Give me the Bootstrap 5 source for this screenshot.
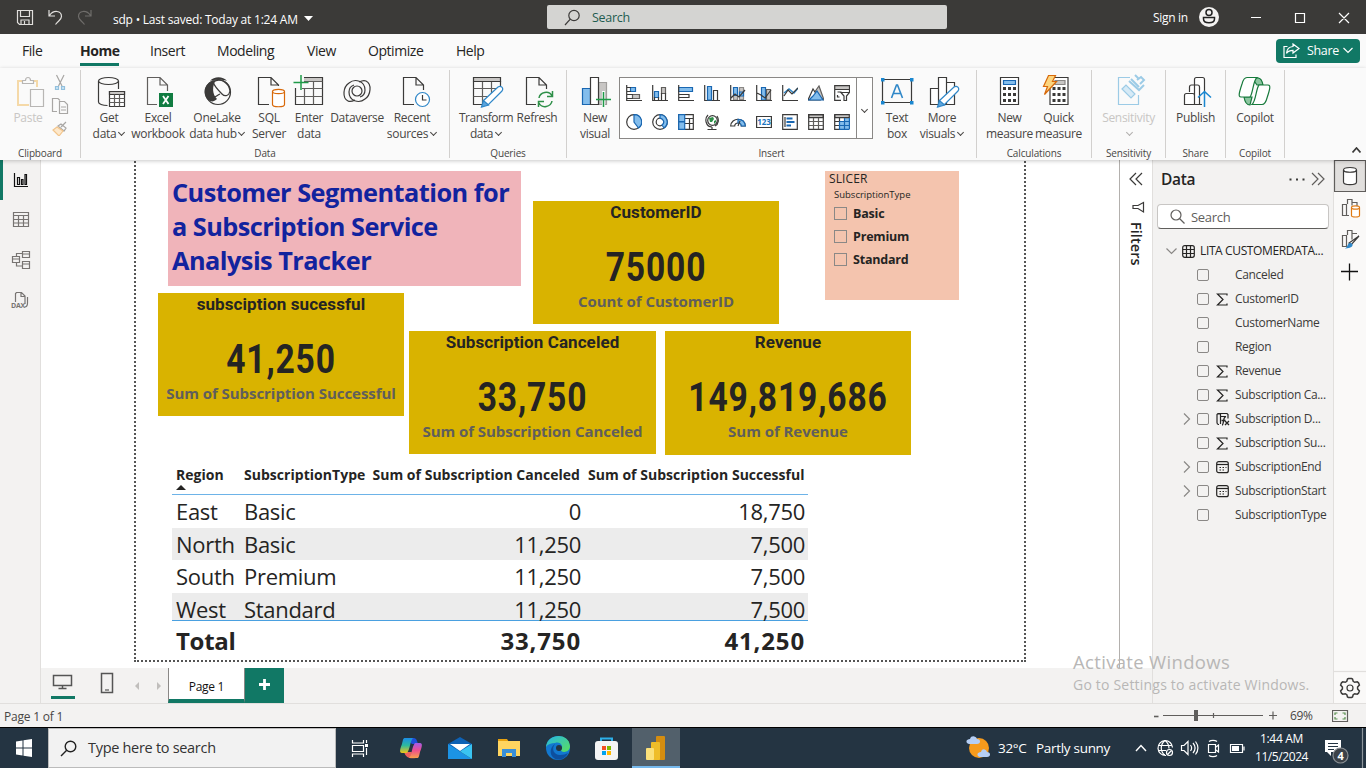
<!DOCTYPE html>
<html lang="en">
<head>
<meta charset="utf-8">
<title>sdp - Power BI Desktop</title>
<link href="https://cdn.jsdelivr.net/npm/bootstrap@5.3.0/dist/css/bootstrap.min.css" rel="stylesheet">
<style>
body{width:1366px;height:768px;overflow:hidden;font-family:"Open Sans","Noto Sans",sans-serif;font-size:12px;letter-spacing:-.3px;color:#252423;line-height:16px;background:#f3f2f1}
svg{display:block;fill:none;stroke:#3b3a39;stroke-width:1.2;flex:none}
.titlebar{height:34px;background:#3b3a38;color:#fff}
.tb-icons{width:113px;padding-left:16px}
.tb-name{width:434px;padding-top:6px;letter-spacing:-.22px}
.tb-search{width:400px;height:24px;background:#d4d4d2;border-radius:2px;color:#1e5c50;padding-left:17px;font-size:12.5px}
.tabs{height:34px;background:#fafafa;font-size:14px;letter-spacing:-.45px;padding-bottom:1px}
.tabs .tab{position:relative;white-space:nowrap}
.tabs .on{font-weight:700}
.tabs .on::after{content:"";position:absolute;left:0;right:0;bottom:-7px;height:3px;background:#117865}
.share{width:84px;height:24px;background:#117865;border-radius:4px;color:#fff;font-size:12.5px;letter-spacing:-.3px;margin-right:6px}
.ribbon{height:92px;background:#fafafa;color:#484644;position:relative;z-index:2;box-shadow:0 1px 4px rgba(0,0,0,.22)}
.grp{position:relative;height:88px;margin-top:2px;border-right:1px solid #d2d0ce;text-align:center}
.grp .glabel{position:absolute;left:0;right:0;bottom:-2px;font-size:10px;line-height:14px;letter-spacing:-.15px}
.rb{padding-top:4px;white-space:nowrap}
.rb svg{margin:0 auto 2px}
.rb.off{color:#c8c6c4}
.w36{width:36px}.w40{width:40px}.w44{width:44px}.w48{width:48px}.w49{width:49px}.w54{width:54px}.w56{width:56px}.w64{width:64px}
.g1{width:81px}.g2{width:369px;padding-left:6px}.g3{width:117px;padding-left:9px}.g4{width:410px;padding-left:10px}.g5{width:115px;padding-left:8px}.g6{width:74px}.g7{width:60px}.g8{width:59px}
.g3 .w54{letter-spacing:-.5px}
.clip{margin-left:-5px}
.chev{display:inline-block;width:5px;height:5px;border:solid #484644;border-width:0 1.4px 1.4px 0;transform:rotate(45deg);margin:0 1px 3px 3px}
.off .chev{border-color:#b0aeac}
.gallery{width:254px;height:62px;border:1px solid #8a8886;background:#fff;margin:7px 6px 0}
.gal-grid{display:grid;grid-template-columns:repeat(9,26px);grid-template-rows:28px 28px;row-gap:1px;padding:1px 0 0 1px;width:237px;border-right:1px solid #8a8886;place-items:center;align-content:start}
.gal-more{width:15px}
.gal-more .chev{margin:3px 0 0 0}
.main{height:543px}
.lrail{width:41px;border-right:1px solid #e1dfdd;background:#f3f2f1}
.lrail .it{height:40px;border-left:3px solid transparent}
.lrail .it.on{border-color:#117865}
.stage{width:1078px;height:508px;background:#fff;position:relative;overflow:hidden}
.page-frame{position:absolute;left:93px;top:-10px;width:892px;height:512px;border:2px dotted #555}
.visual{position:absolute}
.title-box{left:127px;top:11px;width:353px;height:115px;background:#f0b4ba;color:#12239e;font-weight:700;font-size:25.3px;line-height:34px;padding:4px 4px;white-space:nowrap;letter-spacing:-.52px}
.kpi{width:246px;height:123px;background:#d9b300;text-align:center;font-weight:700;white-space:nowrap;color:#252423}
.kpi .k-title{font-family:Roboto,sans-serif;font-size:17px;line-height:22px;letter-spacing:.08px}
.kpi .k-val{font-family:Roboto,sans-serif;font-size:40px;line-height:44px;margin-top:23px;letter-spacing:1px;transform:scaleX(.84)}
.kpi .k-cap{font-size:15px;line-height:20px;margin-top:1px;color:#605e5c;letter-spacing:-.05px}
.slicer{left:784px;top:11px;width:134px;height:129px;background:#f4c4ae}
.chk{width:13px;height:13px;border:1px solid #8a8886}
.grid-vis{left:131px;top:300px;width:636px;font-size:22px;letter-spacing:-.3px}
.grid-vis .r{display:grid;grid-template-columns:68px 128px 216px 224px;height:32.7px;line-height:32px;white-space:nowrap}
.grid-vis .r>div{padding:0 4px}
.grid-vis .r>div:nth-child(n+3){text-align:right;padding-right:3px}
.grid-vis .hd{height:35px;border-bottom:1px solid #6db3e8;font-size:14px;font-weight:700;line-height:30px;letter-spacing:.03px}
.grid-vis .r.hd>div:nth-child(n+3){padding-right:4px}
.grid-vis .alt{background:#ececec}
.grid-vis .last{height:28px;border-bottom:1px solid #4aa0e0}
.grid-vis .tot{font-weight:700;font-size:24px;line-height:40px}
.grid-vis .tot>div:nth-child(n+3){letter-spacing:.85px}
.pagebar{height:35px;background:#f3f2f1}
.ptab{width:77px;height:35px;background:#fff;border-left:1px solid #8a8886;border-right:1px solid #8a8886;border-bottom:4px solid #117865;line-height:37px;color:#111}
.filters{width:33px;background:#fff;border-left:1px solid #b3b0ad;height:508px}
.vtext{writing-mode:vertical-rl;font-weight:600;font-size:14.5px;line-height:18px;letter-spacing:.05px;margin:2px 0 0 -1px}
.dpane{width:181px;border-left:1px solid #e1dfdd;background:#f3f2f1}
.dsearch{height:25px;width:172px;background:#fff;border:1px solid #c8c6c4;border-bottom-color:#605e5c;border-radius:4px;font-size:13px;color:#605e5c}
.fr{height:24px;padding-left:29px;color:#3b3a39;white-space:nowrap;letter-spacing:-.33px}
.fr .cb{width:12px;height:12px;border:1px solid #8a8886;border-radius:2px;margin-left:5px}
.fr .nm{margin-left:5px}
.rrail{width:33px;border-left:1px solid #e1dfdd;background:#faf9f8}
.statusbar{height:24px;border-top:1px solid #e1dfdd;background:#f3f2f1;color:#484644}
.taskbar{height:41px;background:#243442;border-top:1px solid #000;color:#fff}
.wsearch{width:288px;height:40px;background:#f2f2f2;border:1px solid #bbb;color:#333;font-size:14.5px;letter-spacing:-.3px}
.tk.on{width:48px;height:40px;background:#52606b;border-bottom:2px solid #76b9ed}
.watermark{position:absolute;left:1073px;top:651px;color:#b8b7b6;z-index:5;white-space:nowrap;letter-spacing:.2px}
.watermark .l1{font-size:18.5px;line-height:22px;letter-spacing:.33px}
.watermark .l2{font-size:14px;line-height:22px;margin-top:1px}
</style>
</head>
<body class="position-relative">

<div class="titlebar d-flex align-items-center">
  <div class="tb-icons">
    <svg width="80" height="20" viewBox="16 7 80 20" style="stroke:#e1dfdd"><path d="M17.500 10.500h15v14h-13l-2-2zM20.500 10.500v6h9v-6M21 24.500v-4.500h8v4.500M24.500 21v3"/><path d="M49 10v6h6M49.500 15.500c4-6 12-5 12 1 0 3-3 4-6 8"/><path stroke="#6f6d6b" d="M91 10v6h-6M90.500 15.500c-4-6-12-5-12 1 0 3 3 4 6 8"/></svg>
  </div>
  <div class="tb-name d-flex align-items-center"><span>sdp • Last saved: Today at 1:24 AM</span>
    <svg class="mb-1" width="9" height="5" viewBox="0 0 9 5" style="margin-left:6px"><path fill="#fff" stroke="none" d="M0 0h9L4.500 5z"/></svg></div>
  <div class="tb-search d-flex align-items-center">
    <svg width="17" height="17" viewBox="0 0 17 17"><circle cx="10" cy="6.500" r="5.200"/><path d="M6.300 10.200 1 16"/></svg>
    <span style="margin:1px 0 0 11px">Search</span></div>
  <span style="margin:2px 0 0 206px">Sign in</span>
  <svg width="168" height="24" viewBox="1198 5 168 24" class="ms-auto" style="stroke:#fff"><circle cx="1209" cy="17" r="10" fill="#f3f2f1" stroke="none"/><g stroke="#222" stroke-width="1.500"><circle cx="1209" cy="12.500" r="3"/><path d="M1203.500 17.500h11v1.500c0 5-11 5-11 0z"/></g><path d="M1251 17.500h10M1295.500 13.500h9v9h-9zM1339 13l10 10M1349 13l-10 10"/></svg>
</div>

<div class="tabs d-flex align-items-center">
  <span class="tab" style="margin-left:22px;width:58px">File</span><span class="tab on" style="width:39px">Home</span><span class="tab" style="margin-left:31px;width:67px">Insert</span><span class="tab" style="width:90px">Modeling</span><span class="tab" style="width:61px">View</span><span class="tab" style="width:88px">Optimize</span><span class="tab">Help</span>
  <div class="share ms-auto d-flex align-items-center justify-content-center">
    <svg width="17" height="15" viewBox="0 0 17 15" style="stroke:#fff"><path d="M4.500 3.500H1v11h12v-3"/><path d="M10 1l6 4.500-6 4.500V7.300c-3 0-5 .7-6.500 3 .3-4 2.700-6.500 6.500-6.800z"/></svg>
    <span style="margin:0 4px 0 7px">Share</span>
    <svg width="10" height="7" viewBox="0 0 10 7" style="stroke:#fff"><path d="M.5 1 5 5.500 9.500 1"/></svg>
  </div>
</div>

<div class="ribbon d-flex">
  <div class="grp g1 d-flex">
    <div class="rb off w56"><svg width="36" height="34" viewBox="10 74 36 34"><path stroke="#f5d9a8" stroke-width="2" d="M22 81h-4v24h11M33 81h4v6"/><path stroke="#b8b6b4" d="M22.500 83.500v-3h3c0-4 5-4 5 0h3v3z"/><path fill="#fafafa" stroke="#b8b6b4" d="M30.500 89.500h13v17h-13z"/></svg>Paste</div>
    <svg class="clip" width="20" height="66" viewBox="51 70 20 66" style="stroke:#a8a6a4"><path d="M56.500 75 62 86M64 75l-5.500 11"/><g stroke="#92c0dd" fill="#c9e3f4"><path d="M55.500 86.500h3v3h-3zM61.500 86.500h3v3h-3z"/></g><path d="M57 111.500h-4.500v-13H58l2 2"/><path d="M59.500 101.500h5l3 3v9h-8zM61 107h5M61 110h5"/><path d="m66 122-5 5M58 126l6 5 2-3-5-4z"/><path stroke="#f2c58c" fill="#fde8cb" d="m57 127-4 3 6 6 4-5z"/></svg>
    <div class="glabel">Clipboard</div>
  </div>
  <div class="grp g2 d-flex">
    <div class="rb w44"><svg width="36" height="34" viewBox="91 74 36 34"><ellipse cx="108.500" cy="81" rx="10" ry="3.500"/><path d="M98.500 81v21c0 2 4 3.500 9 3.500M118.500 81v8"/><path fill="#fff" d="M109.500 91.500h15v15h-15z"/><path fill="#c8c6c4" d="M109.500 91.500h15v3h-15z"/><path stroke="#605e5c" d="M114.500 94.500v12M119.500 94.500v12M109.500 98.500h15M109.500 102.500h15"/></svg>Get<br>data<i class="chev"></i></div>
    <div class="rb w54"><svg width="36" height="34" viewBox="140 74 36 34"><path stroke="#605e5c" d="M157 104.500h-9.500v-27H160l7.500 7.500v6M160 77.500V85h7.500"/><path fill="#107c41" stroke="none" d="M159 93h14v14h-14z"/><path stroke="#fff" stroke-width="1.800" d="m163 96 5.500 8M168.500 96l-5.500 8"/></svg>Excel<br>workbook</div>
    <div class="rb w64"><svg width="36" height="34" viewBox="199 74 36 34"><path fill="#3b3a39" stroke="none" d="M216 80c-4 6-4 14 1 19-3 3-6 3-9 1-7-8-3-18 8-20zM210 81c4-5 13-5 17 0-5-2-12-2-17 0z"/><circle cx="218" cy="92" r="12.500"/><path d="M213 82c8-5 16 1 17 9-1 5-5 6-8 3-4-4-8-9-9-12zM209 99c5 0 7-3 11-5"/></svg>OneLake<br>data hub<i class="chev" style="margin-left:2px"></i></div>
    <div class="rb w40"><svg width="36" height="34" viewBox="251 74 36 34"><path d="M269 104.500h-10.500v-27H271l7.500 7.500v1M271 77.500V85h7.500"/><g stroke="#d8690a" fill="#fff"><path d="M272.500 91.500v13c0 3 12 3 12 0v-13"/><ellipse cx="278.500" cy="91.500" rx="6" ry="2.200"/></g></svg>SQL<br>Server</div>
    <div class="rb w40"><svg width="36" height="34" viewBox="291 74 36 34"><path fill="#c8c6c4" stroke="none" d="M304 77h19v4h-19z"/><path d="M304 77.500h18.500v27h-27V88"/><path stroke="#605e5c" d="M295.500 96.500h27M302 88.500h20.500M304.500 88v16.500M313.500 81v23.500M304 81.500h18.500"/><path stroke="#1f9a48" stroke-width="1.500" d="M301 75v15M293.500 82.500h15"/></svg>Enter<br>data</div>
    <div class="rb w56"><svg width="36" height="34" viewBox="339 74 36 34"><circle cx="357" cy="91" r="5"/><path d="M366 81c6 3 5 14-1 18-6 5-16 2-16-7 0-4 2-6 5-7M348 101c-6-3-5-14 1-18 6-5 16-2 16 7 0 4-2 6-5 7M366 81c-2-1-5 0-7 1M348 101c2 1 5 0 7-1"/></svg>Dataverse</div>
    <div class="rb w54"><svg width="36" height="34" viewBox="394 74 36 34" style="position:relative;left:1px"><path d="M413 104.500h-10.500v-27H415l7.500 7.500v5M415 77.500V85h7.500"/><circle cx="421.500" cy="99.500" r="7" fill="#fff" stroke="#2f87c8"/><path d="M421.500 95v5h4"/></svg>Recent<br>sources<i class="chev"></i></div>
    <div class="glabel">Data</div>
  </div>
  <div class="grp g3 d-flex">
    <div class="rb w54"><svg width="36" height="34" viewBox="468 74 36 34"><path fill="#c8c6c4" d="M473.500 77.500h27v4h-27z"/><path d="M482 104.500h-8.500v-23M500.500 81v5"/><path stroke="#605e5c" d="M473.500 88.500h25M473.500 96.500h18M482.500 82v22M491.500 82v11"/><path fill="#fff" stroke="#2f87c8" d="m483 101 15-14c3-2 6 1 4 4l-14 14z"/><path fill="#5ea5dc" stroke="#2f87c8" d="m481.500 107 2-6.500 5 4.500z"/></svg>Transform<br>data<i class="chev"></i></div>
    <div class="rb w48"><svg width="36" height="34" viewBox="519 74 36 34"><path d="M536 104.500h-9.500v-27H539l7.500 7.500v4M539 77.500V85h7.500"/><path stroke="#2e8f48" stroke-width="1.500" d="M539 98c1-6 10-8 13-2M552.500 91v5.500H547M552 101c-1 6-10 8-13 2M538.500 107v-5.500h5.500"/></svg>Refresh</div>
    <div class="glabel">Queries</div>
  </div>
  <div class="grp g4 d-flex">
    <div class="rb w36"><svg width="36" height="34" viewBox="577 74 36 34"><path fill="#83bdec" stroke="#1967b2" d="M582.500 88.500h8v16h-8z"/><path fill="#c8c6c4" stroke="#a19f9d" d="M598.500 82.500h8v22h-8z"/><path fill="#fff" d="M590.500 77.500h8v27h-8z"/><path stroke="#fafafa" stroke-width="3" d="M603.500 91v15"/><path stroke="#1f9a48" stroke-width="1.500" d="M603.500 92v15M596 99.500h15"/></svg>New<br>visual</div>
    <div class="gallery d-flex">
      <div class="gal-grid">
        <svg width="16" height="16" viewBox="0 0 16 16"><path fill="#83bdec" stroke="#1967b2" d="M4.500 2.500h5v4h-5z"/><path fill="#c8c6c4" stroke="#605e5c" d="M6.500 9.500h7v4h-7z"/><path d="M.7 0v15.500H16M1 2.500h4M1 6.500h4M1 9.500h6M1 13.500h6"/></svg>
        <svg width="16" height="16" viewBox="0 0 16 16"><path fill="#83bdec" stroke="#1967b2" d="M2.500 6.500h4v6h-4z"/><path fill="#c8c6c4" stroke="#605e5c" d="M9.500 2.500h4v6h-4z"/><path d="M.7 0v15.500H16M2.500 12v3M6.500 12v3M9.500 8v7M13.500 8v7"/></svg>
        <svg width="16" height="16" viewBox="0 0 16 16"><path fill="#83bdec" stroke="#1967b2" d="M.5 2.500h14v4H.5z"/><path d="M.7 0v15.500H16M1 9.500h10v3H1"/></svg>
        <svg width="16" height="16" viewBox="0 0 16 16"><path d="M.7 0v15.500H16M9.500 15V5.500h4V15"/><path fill="#83bdec" stroke="#1967b2" d="M3.500 1.500h4v13.500h-4z"/></svg>
        <svg width="16" height="16" viewBox="0 0 16 16"><path fill="#c8c6c4" stroke="#8a8886" d="M9.500 2.500h4v12h-4zM3.500 10h4v5h-4z"/><path fill="#83bdec" stroke="#1967b2" d="M3.500 2.500h4v8h-4zM9.500 7h4v4h-4z"/><path d="M.7 0v15.500H16M1 13l4-4 4 3 6-7"/></svg>
        <svg width="16" height="16" viewBox="0 0 16 16"><path fill="#83bdec" stroke="#1967b2" d="M5.500 2.500h4V15h-4z"/><path fill="#c8c6c4" stroke="#605e5c" d="M10.500 4.500h4V15h-4z"/><path d="M.7 0v15.500H16M1 8l4 2 4 3 6-8"/></svg>
        <svg width="16" height="16" viewBox="0 0 16 16"><path stroke="#2f87c8" stroke-width="1.500" d="M2 8l5-4 5 4 4-5"/><path d="M.7 0v15.500H16M2 11l4-6 4 4 6-6"/></svg>
        <svg width="16" height="16" viewBox="0 0 16 16"><path fill="#c8c6c4" stroke="#605e5c" d="M6 8 11 1l5 14z"/><path d="M0 15 5 4l7 11z" fill="#fff"/><path fill="#83bdec" stroke="#1967b2" d="m1 15 4-4 4-5 6 9z"/></svg>
        <svg width="16" height="16" viewBox="0 0 16 16"><path fill="#c8c6c4" stroke="none" d="M1 1h14v3H1z"/><path d="M15.500 7V.7H.7v14.600H7M1 4.500h14M3.500 7h4M3.500 10v2h2"/><path fill="#fff" d="M7 7.500h8.500L12.500 11v4.500H10V11z"/></svg>
        <svg width="16" height="16" viewBox="0 0 16 16"><circle cx="8" cy="8" r="7.300"/><path fill="#83bdec" stroke="#1967b2" d="M8 .7A7.300 7.300 0 0 1 12.500 14L8 8z"/></svg>
        <svg width="16" height="16" viewBox="0 0 16 16"><circle cx="8" cy="8" r="7.300"/><circle cx="8" cy="8" r="3.800"/><path fill="#83bdec" stroke="#1967b2" d="M8 .7A7.300 7.300 0 0 1 12 14l-2-3c3-2 2-6-2-6.800z"/></svg>
        <svg width="16" height="16" viewBox="0 0 16 16"><path d="M.7.700h14.600v14.600H.7zM7 4.500h8M7 9.500h8M11.500 5v10"/><path fill="#83bdec" stroke="#1967b2" d="M.7.700h6v6.800h-6zM.7 8h6v7.300h-6z"/></svg>
        <svg width="16" height="16" viewBox="0 0 16 16"><circle cx="8.500" cy="6.500" r="4.800" fill="#fff"/><path fill="#2e8f48" stroke="none" d="M5 4l4-1 1 2-2 3H6zM10 7l2-1v2l-2 2z"/><path d="M4 1C0 5 2 13 8 13M13 2c2 3 2 8-2 10M8 13v2.500M3.500 15.500h9"/></svg>
        <svg width="16" height="16" viewBox="0 0 16 16"><path fill="#fff" d="M.7 12C1 3 15 3 15.300 12h-4c0-4-6.600-4-6.600 0z"/><path fill="#83bdec" stroke="#1967b2" d="M8 5.300c5 0 7 3 7.300 6.700h-4c0-2-1-3-3.300-3z"/><path d="M8 12l2-5"/></svg>
        <svg width="16" height="16" viewBox="0 0 16 16"><path d="M.6 2.500h14.800v11H.6z"/><text x="8" y="11" text-anchor="middle" font-size="8" font-weight="700" letter-spacing="0" fill="#1b74c0" stroke="none">123</text></svg>
        <svg width="16" height="16" viewBox="0 0 16 16"><path d="M.7.700h14.600v14.600H.7zM3 3v10"/><path stroke="#1967b2" stroke-width="1.800" d="M4.500 4.500h6M4.500 8h8M4.500 11.500h4.500"/></svg>
        <svg width="16" height="16" viewBox="0 0 16 16"><path fill="#c8c6c4" d="M.7.700h14.600v3H.7z"/><path d="M.7.700h14.600v14.600H.7z"/><path stroke="#605e5c" d="M1 7.500h14M1 11.500h14M5.500 4v11M10.500 4v11"/></svg>
        <svg width="16" height="16" viewBox="0 0 16 16"><path fill="#83bdec" stroke="none" d="M6 8h9v7H6zM10 4h5v5h-5z"/><path fill="#c8c6c4" d="M.7.700h14.600v3H.7z"/><path d="M.7 1v14.300H6M1 7.500h5M1 11.500h5M5.500 4v4"/><path stroke="#1967b2" d="M5.500 7.500h10M5.500 11.500h10M5.500 15.300h10M5.500 7.500v8M10.500 4v11M15.400 4v11"/></svg>
      </div>
      <div class="gal-more d-flex align-items-center justify-content-center"><i class="chev"></i></div>
    </div>
    <div class="rb w36"><svg width="36" height="34" viewBox="879 74 36 34"><path d="M882.500 79.500h29v23h-29z"/><path stroke="#2f87c8" stroke-width="1.600" d="m891.500 98 5-13h1l5 13M893.500 93.500h7"/><path fill="#1b87d0" stroke="none" d="M881 78h3.500v3.500H881zM910 78h3.500v3.500H910zM881 101h3.500v3.500H881zM910 101h3.500v3.500H910z"/></svg>Text<br>box</div>
    <div class="rb w48" style="margin-left:3px"><svg width="36" height="34" viewBox="924 74 36 34"><path fill="#fff" d="M930.500 88.500h8v16h-8zM946.500 82.500h8v22h-8zM938.500 77.500h8v27h-8z"/><path fill="#fff" stroke="#2f87c8" d="m939 101 15-14c3-2 6 1 4 4l-14 14z"/><path fill="#5ea5dc" stroke="#2f87c8" d="m937.500 107 2-6.500 5 4.500z"/></svg>More<br>visuals<i class="chev"></i></div>
    <div class="glabel">Insert</div>
  </div>
  <div class="grp g5 d-flex">
    <div class="rb w49"><svg width="36" height="34" viewBox="992 74 36 34"><path fill="#fff" d="M1000.500 77.500h18v27h-18z"/><path fill="#83bdec" stroke="#1967b2" d="M1003.500 80.500h12v4h-12z"/><path stroke-width="3" stroke-dasharray="3 2" d="M1003 88.500h13M1003 94.500h13M1003 100.500h13"/></svg>New<br>measure</div>
    <div class="rb w49"><svg width="36" height="34" viewBox="1040.500 74 36 34"><path fill="#fff" d="M1049.500 77.500h18v27h-18z"/><path fill="#c8c6c4" stroke="#8a8886" d="M1054.500 80.500h10v4h-10z"/><path stroke-width="3" stroke-dasharray="3 2" d="M1052 88.500h13M1052 94.500h13M1052 100.500h13"/><path fill="#fcd57f" stroke="#d8690a" d="M1048 75.500h7l-3 6h4l-12 13 3-8h-4z"/></svg>Quick<br>measure</div>
    <div class="glabel">Calculations</div>
  </div>
  <div class="grp g6">
    <div class="rb off"><svg width="36" height="34" viewBox="1111 74 36 34" style="stroke:#9ccbe6"><path d="M1130 77.500h-11.500v27h20V95"/><path fill="#d6eaf6" d="m1122 89 4-4 9 9-4 4z"/><path stroke-width="2" d="m1131 79 8 8M1129 81l10 9 5-5M1135 75l4 4M1137 80l4-3 3 3-4 4"/></svg>Sensitivity<br><i class="chev"></i></div>
    <div class="glabel">Sensitivity</div>
  </div>
  <div class="grp g7">
    <div class="rb"><svg width="36" height="34" viewBox="1178 74 36 34"><path fill="#fff" d="M1194.500 104.500v-25c0-1 .5-2 2-2h6c1.500 0 2 1 2 2v12M1189.500 92v-5c0-1 1-2 2-2h6c1 0 2 1 2 2v17M1184.500 104.500v-9c0-1 1-2 2-2h6c1 0 2 1 2 2v9zM1194 104.500h8"/><path stroke="#fafafa" stroke-width="4" d="M1204.500 107V93"/><path stroke="#1b87d0" stroke-width="1.500" d="M1204.500 107V92M1198 97.500l6.500-6 6.500 6"/></svg>Publish</div>
    <div class="glabel">Share</div>
  </div>
  <div class="grp g8">
    <div class="rb"><svg width="36" height="34" viewBox="1237 74 36 34" style="stroke:#177a3c"><path fill="#8cc5a0" d="M1252 78h6c3 0 4 2 5 7h-6zM1244 97h8l-2 8c-3 0-5-2-6-8z"/><path fill="#fff" d="M1247 77.500h10c-4 3-4 16-7 19.500h-9c-3 0-2-4 1-13 1-4 2-6.500 5-6.500z"/><path fill="#fff" d="M1262 104.500h-10c4-3 4-16 7-19.500h9c3 0 2 4-1 13-1 4-2 6.500-5 6.500z"/></svg>Copilot</div>
    <div class="glabel">Copilot</div>
  </div>
  <svg class="ms-auto mt-auto" width="9" height="6" viewBox="0 0 9 6" style="margin:0 5px 7px;stroke-width:1.700"><path d="M.5 5.500 4.500 1l4 4.500"/></svg>
</div>

<div class="main d-flex">
  <div class="lrail">
    <div class="it on"></div>
    <svg width="40" height="144" viewBox="0 168 40 144" style="margin-top:-32px;stroke:#777472"><path stroke="#111" stroke-width="1.200" d="M14.500 173v13.500H28M17.500 177.500h2v7h-2zM21.500 179.500h1.500v5h-1.500zM25 174.500h1.500v10H25z"/><path d="M13.500 212.500h15v14h-15zM13.500 215.500h15M13.500 219.500h15M13.500 223h15M18.500 215v11M23.500 215v11"/><path d="M12.500 256.500h7v6h-7zM12.500 259h7M22.500 251.500h7v6h-7zM22.500 254h7M22.500 261.500h7v7h-7zM22.500 264h7M16.500 256v-2.500h6M16.500 263v3h6"/><path d="M15.500 302v-8.500l1-1h5l3.500 3.500v8M21 292.500v4h4M27.500 297v6c0 2-1 4-3 4"/><text x="11" y="308" font-size="7" font-weight="700" letter-spacing="-.3" fill="#777472" stroke="none">DAX</text></svg>
  </div>
  <div>
    <div class="d-flex">
      <div class="stage">
        <div class="page-frame"></div>
        <div class="visual title-box"><span>Customer Segmentation for</span><br><span>a Subscription Service</span><br><span>Analysis Tracker</span></div>
        <div class="visual kpi" style="left:492px;top:41px"><div class="k-title">CustomerID</div><div class="k-val">75000</div><div class="k-cap">Count of CustomerID</div></div>
        <div class="visual kpi" style="left:117px;top:133px"><div class="k-title">subsciption sucessful</div><div class="k-val">41,250</div><div class="k-cap">Sum of Subscription Successful</div></div>
        <div class="visual kpi" style="left:368px;top:171px;width:247px"><div class="k-title">Subscription Canceled</div><div class="k-val">33,750</div><div class="k-cap">Sum of Subscription Canceled</div></div>
        <div class="visual kpi" style="left:624px;top:171px;height:124px"><div class="k-title">Revenue</div><div class="k-val">149,819,686</div><div class="k-cap">Sum of Revenue</div></div>
        <div class="visual slicer">
          <div style="padding-left:4px;letter-spacing:.1px">SLICER</div>
          <div style="padding-left:9px;font-size:9.500px;letter-spacing:0">SubscriptionType</div>
          <div class="fw-bold" style="padding-left:9px;font-size:12.500px;letter-spacing:-.2px">
            <div class="d-flex align-items-center" style="height:23px;margin-top:-1px"><i class="chk"></i><span style="margin-left:6px">Basic</span></div>
            <div class="d-flex align-items-center" style="height:23px"><i class="chk"></i><span style="margin-left:6px">Premium</span></div>
            <div class="d-flex align-items-center" style="height:23px"><i class="chk"></i><span style="margin-left:6px">Standard</span></div>
          </div>
        </div>
        <div class="visual grid-vis">
          <div class="r hd"><div>Region<svg width="10" height="5" viewBox="0 0 10 5" style="margin-top:-5px"><path fill="#252423" stroke="none" d="M0 5 5 0l5 5z"/></svg></div><div>SubscriptionType</div><div>Sum of Subscription Canceled</div><div>Sum of Subscription Successful</div></div>
          <div class="r"><div>East</div><div>Basic</div><div>0</div><div>18,750</div></div>
          <div class="r alt"><div>North</div><div>Basic</div><div>11,250</div><div>7,500</div></div>
          <div class="r"><div>South</div><div>Premium</div><div>11,250</div><div>7,500</div></div>
          <div class="r alt last"><div>West</div><div>Standard</div><div>11,250</div><div>7,500</div></div>
          <div class="r tot"><div>Total</div><div></div><div>33,750</div><div>41,250</div></div>
        </div>
      </div>
      <div class="filters d-flex flex-column align-items-center">
        <svg width="32" height="60" viewBox="1120 160 32 60"><path d="m1136 173-6 6 6 6M1142 173l-6 6 6 6"/><path d="M1143.500 202.500v9.500l-5.500-3.500h-5v-3h5z"/></svg>
        <span class="vtext">Filters</span>
      </div>
    </div>
    <div class="pagebar d-flex align-items-start">
      <svg width="127" height="35" viewBox="41 668 127 35" style="stroke:#555"><path stroke-width="1.500" d="M53.500 675.500h18v10h-18zM62.500 685.500v3M58.500 688.500h8M101.500 673.500h11v19h-11z"/><path d="M105 690h4"/><path fill="#117865" stroke="none" d="M51 696h24v3H51z"/><path fill="#c0bebc" stroke="none" d="M139 682v8l-4-4zM157 682v8l4-4z"/></svg>
      <div class="ptab text-center">Page 1</div>
      <svg width="39" height="35" viewBox="0 0 39 35" style="background:#117865"><path stroke="#fff" stroke-width="2.800" d="M19.500 11v11M14 16.500h11"/></svg>
    </div>
  </div>
  <div class="dpane">
    <div class="d-flex align-items-center" style="height:38px;padding-left:8px"><span class="fw-semibold" style="font-size:15.500px">Data</span>
      <svg class="ms-auto" width="45" height="20" viewBox="1288 169 45 20"><path stroke-width="2" stroke-dasharray="2 4.500" d="M1289.500 179.500h16"/><path stroke="#605e5c" d="m1312 173 6 6-6 6M1318 173l6 6-6 6"/></svg></div>
    <div class="dsearch d-flex align-items-center" style="margin:6px 0 0 4px"><svg width="15" height="15" viewBox="0 0 15 15" style="margin:0 6px 0 12px;stroke:#605e5c"><circle cx="6" cy="6" r="5"/><path d="m9.500 9.500 5 5"/></svg>Search</div>
    <div class="d-flex align-items-center" style="height:24px;margin-top:10px;padding-left:13px;white-space:nowrap"><svg width="11" height="7" viewBox="0 0 11 7" style="stroke:#8a8886"><path d="M.5.500l5 5 5-5"/></svg><svg width="13" height="13" viewBox="0 0 13 13" style="margin:0 5px 0 5px;stroke:#252423"><rect x=".7" y=".7" width="11.600" height="11.600" rx="2"/><path d="M4.500 1v11M8.500 1v11M1 4.500h11M1 8.500h11"/></svg><span style="letter-spacing:-.37px">LITA CUSTOMERDATA...</span></div>
    <div id="fields"></div>
  </div>
  <div class="rrail"><svg width="32" height="543" viewBox="1334 160 32 543"><path fill="#e1dfdd" stroke="#605e5c" d="M1334.500 160.500h31v31h-31z"/><ellipse cx="1350" cy="170" rx="6.500" ry="2.500" fill="#fff"/><path fill="#fff" d="M1343.500 170v12c0 3.500 13 3.500 13 0v-12c0 3-13 3-13 0z"/><path stroke="#605e5c" d="M1349 215.500h-6.500v-11h4v11M1347.500 204v-4.500h4.500v6M1352 202.500h5v4"/><g stroke="#e07a12" fill="#fff"><path d="M1351.500 207.500v8c0 2 8 2 8 0v-8"/><ellipse cx="1355.500" cy="207.500" rx="4" ry="1.700"/></g><path stroke="#605e5c" d="M1347 246.500h-4.500v-11h4v11M1347.500 235v-4.500h4.500v9M1352 233.500h5"/><path fill="#fff" d="m1359 236-8 9-2-2z"/><path fill="#2f87c8" stroke="none" d="M1344 248.500c4 0 3-6 6.500-5.500s3.500 5.500-6.500 5.500z"/><path stroke="#111" stroke-width="1.300" d="M1349.500 263.500v17M1341 271.500h17"/><path stroke="#e1dfdd" d="M1334 671.500h32"/><path stroke-width="1.500" d="m1347.500 679 1-.5h3l1 .5.700 2.300 1.500 1 2.600-.5 1.200 1 .9 2.200-1.800 2v2l1.800 2-.9 2.200-1.200 1-2.600-.5-1.500 1-.7 2.300-1 .5h-3l-1-.5-.7-2.300-1.500-1-2.600.5-1.200-1-.9-2.200 1.800-2v-2l-1.800-2 .9-2.200 1.200-1 2.600.5 1.500-1z"/><circle cx="1350" cy="688" r="3"/></svg></div>
</div>

<div class="statusbar d-flex align-items-center">
  <span style="padding:3px 0 0 4px;letter-spacing:-.2px">Page 1 of 1</span>
  <svg class="ms-auto" width="126" height="20" viewBox="1152 706 126 20" style="stroke:#605e5c"><path stroke-width="1.600" d="M1154 716.500h4.500"/><path d="M1163 715.500h100M1213.500 713v5M1269 715.500h8M1273 711.500v8"/><path fill="#605e5c" stroke="none" d="M1194 710h4v11h-4z"/></svg>
  <span style="margin-left:12px;width:42px;padding-top:1px">69%</span>
  <svg width="34" height="16" viewBox="1332 708 34 16" style="stroke:#605e5c"><path d="M1332.500 710.500h15v11h-15z"/><path stroke="#5a8f50" d="M1335 715v-2h2.500M1342.500 713h2.500v2M1335 717v2h2.500M1345 717v2h-2.500"/></svg>
</div>

<div class="taskbar d-flex align-items-center">
  <svg width="48" height="40" viewBox="0 728 48 40"><path fill="#fff" stroke="none" d="M16 741.500l6.500-1v7H16zM23.500 740.300l8.500-1.200v8.400h-8.500zM16 748.500h6.500v7l-6.500-1zM23.500 748.500H32v8.400l-8.500-1.200z"/></svg>
  <div class="wsearch d-flex align-items-center"><svg width="17" height="17" viewBox="0 0 17 17" style="margin:0 11px 0 11px;stroke:#222;stroke-width:1.400"><circle cx="10.500" cy="6.500" r="5.300"/><path d="M6.700 10.300 1 16"/></svg><span>Type here to search</span></div>
  <svg width="50" height="40" viewBox="336 728 50 40" style="stroke:#fff"><path d="M352.500 740v3h11v-3M352.500 745.500h11v6h-11zM352.500 757v-3h11v3M366.500 740v3M366.500 748v7"/><path fill="#fff" stroke="none" d="M365 744h3v3h-3z"/></svg>
  <svg width="246" height="40" viewBox="386 728 246 40" style="stroke:none">
    <defs><linearGradient id="a" x1="0" y1="0" x2="0" y2="1"><stop offset="0" stop-color="#1b8ee8"/><stop offset=".5" stop-color="#2dbb9c"/><stop offset="1" stop-color="#f4c516"/></linearGradient><linearGradient id="b" x1="0" y1="0" x2="0" y2="1"><stop offset="0" stop-color="#a45be8"/><stop offset=".5" stop-color="#f0508c"/><stop offset="1" stop-color="#fba04b"/></linearGradient><linearGradient id="c" x1="0" y1="0" x2="1" y2="1"><stop offset="0" stop-color="#25b5e8"/><stop offset="1" stop-color="#5be05a"/></linearGradient></defs>
    <path fill="#1f4fd8" d="M406 738h8c2 0 3 2 4 6h-6z"/><path fill="#f0605c" d="M404 752h8l-2 6h6c-6 1-10 0-12-6z"/><path fill="url(#a)" d="M405 738h8c-3 3-3 12-6 15h-5c-3 0-2-4 0-9 1-4 1-6 3-6z"/><path fill="url(#b)" d="M417 758h-8c3-3 3-12 6-15h5c3 0 2 4 0 9-1 4-1 6-3 6z"/>
    <path fill="#0e62b5" d="M448 744l12-7 12 7v7h-24z"/><path fill="#fff" d="M450 744h20l-10 7z"/><path fill="#1c93e5" d="M448 744l12 7.500L472 759h-24z"/><path fill="#3ac4f2" d="M472 744v15l-12-7.500z"/>
    <path fill="#e8a20f" d="M498 739h9l2 3h-11z"/><path fill="#ffd560" d="M498 741h22v15h-22z"/><path fill="#3a8fd8" d="M502 749h14v8h-4v-4h-6v4h-4z"/>
    <circle cx="558" cy="748" r="12" fill="#1278d0"/><path fill="url(#c)" d="M546 747c1-14 23-15 24-1 0 7-9 7-9 4 3-3 0-9-6-7-4 0-7 1-9 4z"/><path fill="#0d4f9e" d="M555 744c-4 5-1 11 5 11 3 0 6-1 8-2-4 9-15 8-17 1-1-5 1-8 4-10z"/><circle cx="559" cy="748" r="3" fill="#243442"/>
    <path fill="none" stroke="#2cb0ea" stroke-width="2" d="M601 743v-4.500h11v4.500"/><rect x="595" y="741" width="23" height="19" rx="3" fill="#f4f4f4"/><path fill="#f25022" d="M602 746h4v4h-4z"/><path fill="#7fba00" d="M607 746h4v4h-4z"/><path fill="#00a4ef" d="M602 751h4v4h-4z"/><path fill="#ffb900" d="M607 751h4v4h-4z"/>
  </svg>
  <div class="tk on"><svg width="48" height="38" viewBox="632 728 48 38" style="stroke:none"><rect x="656" y="736" width="9" height="24" rx="1" fill="#d58d10"/><rect x="651" y="742" width="9" height="18" rx="1" fill="#efbd2a"/><rect x="646" y="748" width="8" height="12" rx="1" fill="#fbe07a"/></svg></div>
  <svg class="ms-auto" width="26" height="26" viewBox="965 735 26 26" style="stroke:none"><circle cx="979" cy="748" r="10" fill="#f69a1c"/><path fill="#b5cef5" d="M969 744c-4-1-3-5 1-5 1-4 6-3 7 0 4 0 4 5 0 5zM980 757c-4-1-3-5 1-5 1-4 5-3 6 0 4 0 4 5 0 5z"/></svg>
  <span style="font-size:13.500px;margin-left:7px;width:38px">32°C</span><span style="font-size:13.500px;width:92px">Partly sunny</span>
  <svg width="118" height="30" viewBox="1128 733 118 30" style="stroke:#fff"><path stroke-width="1.400" d="m1136 751 5-5.500 5 5.500"/><path d="M1165 740.500a7.500 7.500 0 1 0 1 15M1165 740.500c-5 4-5 11 0 15M1165 740.500c4 3 4 6 4 8M1165 740.500a7.500 7.500 0 0 1 7.500 7M1158 745.500h14M1158 750.500h8"/><circle cx="1169.500" cy="752.500" r="3"/><path d="m1167.500 754.500 4-4M1181.500 745.500h2.500l4-4v13l-4-4h-2.500zM1190.500 745c1.500 2 1.500 4 0 6M1193 743c2.500 3 2.500 7 0 10M1195.500 741.500c3 4 3 9 0 13M1208.500 744.500h7v8h-7zM1216 747l2.500-2v7l-2.500-2M1209 741.500c2-1.500 6-1.500 8 0M1209 755.500c2 1.500 6 1.500 8 0M1230.500 744.500h12v8h-12zM1244 746.500v4"/><path fill="#fff" stroke="none" d="M1232 746h7v5h-7z"/></svg>
  <div class="text-center" style="width:71px;line-height:18px"><span>1:44 AM</span><br><span style="letter-spacing:-.42px">11/5/2024</span></div>
  <svg width="49" height="40" viewBox="1317 728 49 40"><path fill="#fff" stroke="none" d="M1325 740h16v12h-10v4l-4-4h-2z"/><path stroke="#243442" d="M1328 743.500h10M1328 746.500h10M1328 749.500h6"/><circle cx="1340.500" cy="755.500" r="7.500" fill="#3b4148" stroke="#8a8f94"/><text x="1340.500" y="760" font-size="11" font-weight="700" text-anchor="middle" fill="#fff" stroke="none">4</text><path stroke="#8d959b" d="M1362.500 728v40"/></svg>
</div>

<div class="watermark"><div class="l1">Activate Windows</div><div class="l2">Go to Settings to activate Windows.</div></div>

<script src="https://cdn.jsdelivr.net/npm/bootstrap@5.3.0/dist/js/bootstrap.bundle.min.js"></script>
<script>
// Field list of the data pane: [name, icon, expandable]
const icons = {
  sum: '<path d="M11 3.500V2H1.500L7 7.500 1.500 13H11v-1.500"/>',
  cal: '<rect x=".7" y="1.700" width="11.600" height="11" rx="2"/><path d="M1 4.500h11"/><path stroke-dasharray="1.500 1.500" d="M3.500 7.500h7M3.500 10h5"/>',
  fx: '<path d="M3 12.500H2.500a2 2 0 0 1-1.500-2v-8l1-1h9l1 1v4M4.500 2v10M1 2h3M5 4.500h5"/><path stroke-width="1.300" d="M10 5c-3-1-2 8-4 8M5.500 8.500h4M9 9l4 4M13 9l-4 4"/>'
};
const rows = [['Canceled'],['CustomerID','sum'],['CustomerName'],['Region'],['Revenue','sum'],['Subscription Ca...','sum'],['Subscription D...','fx',1],['Subscription Su...','sum'],['SubscriptionEnd','cal',1],['SubscriptionStart','cal',1],['SubscriptionType']];
document.getElementById('fields').innerHTML = rows.map(([n,i,e]) =>
  `<div class="fr d-flex align-items-center"><svg width="10" height="12" viewBox="0 0 10 12" style="stroke:#8a8886">${e?'<path d="M2 .5 7.500 6 2 11.500"/>':''}</svg><i class="cb"></i><svg width="14" height="14" viewBox="0 0 14 14" style="margin-left:7px;stroke:#252423">${i?icons[i]:''}</svg><span class="nm">${n}</span></div>`).join('');
</script>
</body>
</html>
